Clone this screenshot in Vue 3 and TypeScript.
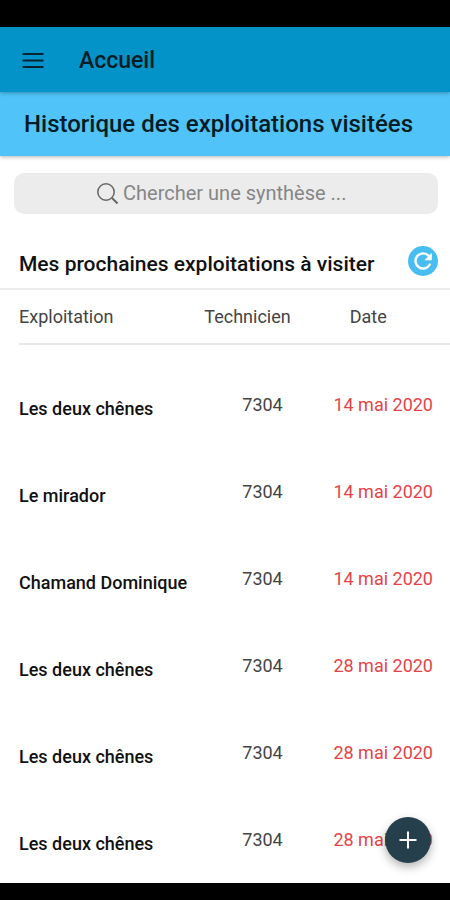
<script setup lang="ts">
import { ref } from 'vue'

interface Visit {
  id: number
  farm: string
  technician: string
  date: string
}

const query = ref('')

const visits = ref<Visit[]>([
  { id: 1, farm: 'Les deux chênes', technician: '7304', date: '14 mai 2020' },
  { id: 2, farm: 'Le mirador', technician: '7304', date: '14 mai 2020' },
  { id: 3, farm: 'Chamand Dominique', technician: '7304', date: '14 mai 2020' },
  { id: 4, farm: 'Les deux chênes', technician: '7304', date: '28 mai 2020' },
  { id: 5, farm: 'Les deux chênes', technician: '7304', date: '28 mai 2020' },
  { id: 6, farm: 'Les deux chênes', technician: '7304', date: '28 mai 2020' },
])
</script>

<template>
  <div class="screen">
    <div class="system-bar"></div>

    <header class="toolbar">
      <button class="icon-button" type="button" aria-label="Menu">
        <svg width="22" height="16" viewBox="0 0 22 16" fill="none" stroke="currentColor" stroke-width="2">
          <path d="M0.500 1h21M0.500 7.500h21M0.500 14h21" />
        </svg>
      </button>
      <h1 class="title">Accueil</h1>
    </header>

    <div class="banner">
      <h2 class="banner-title">Historique des exploitations visitées</h2>
    </div>

    <main class="content">
      <label class="search">
        <svg class="search-icon" width="22" height="22" viewBox="0 0 22 22" fill="none" stroke="currentColor" stroke-width="1.500">
          <circle cx="9" cy="9" r="8.200" />
          <path d="M15 15L20.500 20.500" stroke-width="2" />
        </svg>
        <input v-model="query" class="search-input" type="text" aria-label="Chercher une synthèse" placeholder="Chercher une synthèse ..." />
      </label>

      <section>
        <div class="section-head">
          <h3 class="section-title">Mes prochaines exploitations à visiter</h3>
          <button class="refresh" type="button" aria-label="Actualiser">
            <svg width="30" height="30" viewBox="0 0 30 30" fill="none">
              <path d="M21.800 18.500A7.600 7.600 0 1 1 20.500 9.600" stroke="#fff" stroke-width="2.400" stroke-linecap="round" />
              <path d="M23.800 6.800v7.400h-7.400z" fill="#fff" />
            </svg>
          </button>
        </div>

        <table class="visits">
          <thead>
            <tr>
              <th class="col-farm" scope="col">Exploitation</th>
              <th class="col-tech" scope="col">Technicien</th>
              <th class="col-date" scope="col">Date</th>
            </tr>
          </thead>
          <tbody>
            <tr v-for="visit in visits" :key="visit.id">
              <td class="farm">{{ visit.farm }}</td>
              <td class="tech">{{ visit.technician }}</td>
              <td class="date">{{ visit.date }}</td>
            </tr>
          </tbody>
        </table>
      </section>

      <button class="fab" type="button" aria-label="Ajouter">
        <svg width="20" height="20" viewBox="0 0 20 20" fill="none" stroke="currentColor" stroke-width="2">
          <path d="M10 1.500v17M1.500 10h17" />
        </svg>
      </button>
    </main>

    <div class="nav-bar"></div>
  </div>
</template>

<style>
body {
  margin: 0;
  background: #fff;
}
</style>

<style scoped>
.screen {
  display: flex;
  flex-direction: column;
  min-height: 100vh;
  font-family: Roboto, "Liberation Sans", sans-serif;
  color: #111;
  background: #fff;
}

h1,
h2,
h3 {
  margin: 0;
  font-weight: 500;
}

button {
  display: flex;
  align-items: center;
  justify-content: center;
  padding: 0;
  border: 0;
  cursor: pointer;
}

.system-bar {
  height: 27px;
  background: #000;
}

.nav-bar {
  height: 17px;
  background: #000;
}

.toolbar {
  position: relative;
  z-index: 1;
  display: flex;
  align-items: center;
  gap: 29px;
  height: 65px;
  padding: 2px 16px 0;
  box-sizing: border-box;
  background: #0493c9;
  box-shadow: 0 1px 4px rgba(0, 0, 0, 0.3);
}

.icon-button {
  width: 34px;
  height: 34px;
  color: #06242f;
  background: transparent;
}

.title {
  font-size: 23px;
  line-height: 28px;
  color: #041c26;
}

.banner {
  display: flex;
  align-items: center;
  height: 64px;
  padding: 0 24px;
  background: #50c4f8;
  box-shadow: 0 1px 4px rgba(0, 0, 0, 0.3);
}

.banner-title {
  font-size: 24px;
  line-height: 28px;
  color: #041c26;
  white-space: nowrap;
}

.content {
  position: relative;
  flex: 1;
}

.search {
  display: flex;
  align-items: center;
  justify-content: center;
  gap: 4px;
  height: 41px;
  margin: 17px 12px 0 14px;
  border-radius: 10px;
  background: #ececec;
}

.search-icon {
  flex: none;
  color: #666;
}

.search-input {
  width: 232px;
  height: 24px;
  padding: 0 0 2px;
  border: 0;
  outline: 0;
  box-sizing: border-box;
  font: inherit;
  font-size: 20px;
  color: #333;
  background: transparent;
}

.search-input::placeholder {
  color: #868686;
  opacity: 1;
}

.section-head {
  display: flex;
  align-items: flex-start;
  justify-content: space-between;
  height: 42px;
  margin-top: 24px;
  padding: 8px 12px 0 19px;
  border-bottom: 2px solid #ececec;
}

.section-title {
  font-size: 21px;
  line-height: 36px;
}

.refresh {
  width: 30px;
  height: 30px;
  border-radius: 50%;
  background: #48bdf2;
}

.visits {
  width: calc(100% - 19px);
  margin-left: 19px;
  border-collapse: separate;
  border-spacing: 0;
  table-layout: fixed;
}

.visits th {
  height: 53px;
  padding: 0;
  border-bottom: 2px solid #e6e6e6;
  font-size: 18px;
  font-weight: 400;
  line-height: 24px;
  text-align: left;
  color: #444;
}

.visits thead::after {
  content: "";
  display: block;
  height: 16px;
}

.col-farm {
  width: 43%;
}

.col-tech {
  width: 27%;
}

.visits .col-date {
  width: 30%;
  padding-left: 29px;
  box-sizing: border-box;
}

.visits td {
  height: 87px;
  padding: 0;
  font-size: 18px;
  line-height: 24px;
  box-sizing: border-box;
  white-space: nowrap;
}

.visits .farm {
  padding-top: 8px;
  font-weight: 500;
}

.visits .tech {
  text-align: center;
  color: #444;
}

.visits .date {
  padding-right: 17px;
  text-align: right;
  color: #e54347;
}

.fab {
  position: absolute;
  right: 19px;
  bottom: 20px;
  width: 46px;
  height: 46px;
  border-radius: 50%;
  color: #fff;
  background: #263f4c;
  box-shadow: 0 4px 10px rgba(0, 0, 0, 0.3);
}
</style>
